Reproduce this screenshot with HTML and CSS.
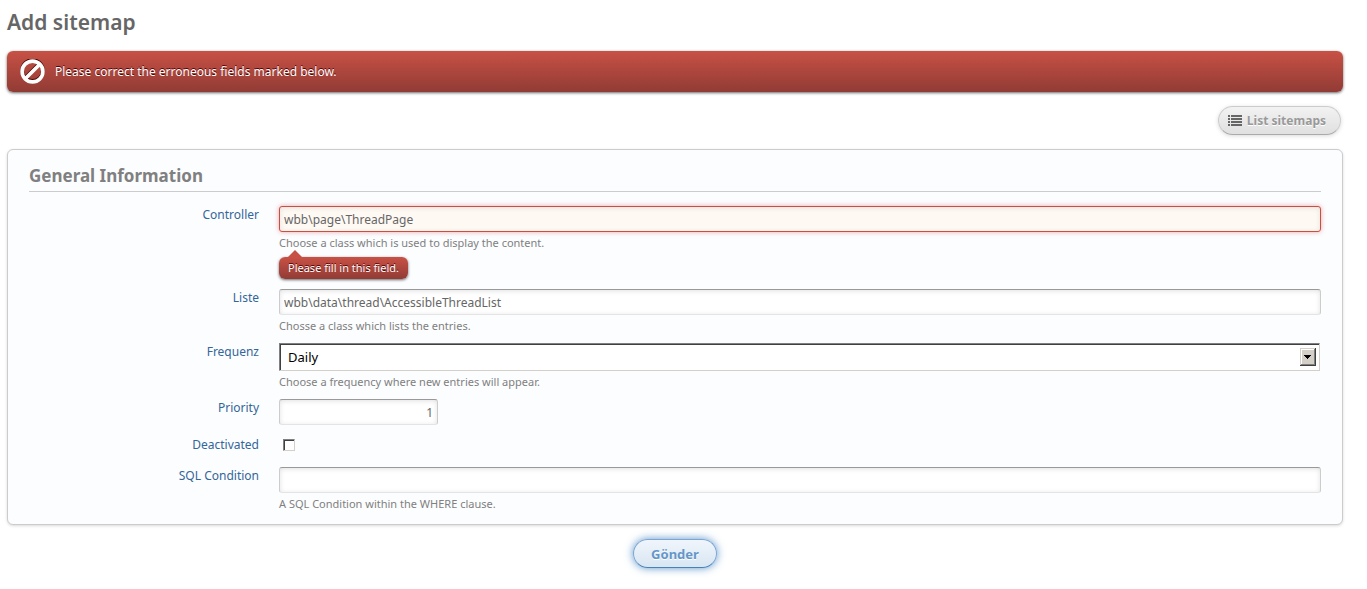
FILE: index.html
```
<!DOCTYPE html>
<html lang="en">
<head>
<meta charset="utf-8">
<title>Add sitemap</title>
<link rel="stylesheet" href="styles.css">
</head>
<body>
<main class="page">
  <h1 class="page-title">Add sitemap</h1>
  <p class="error-banner" role="alert">
    <svg class="error-icon" viewBox="0 0 24 24" aria-hidden="true">
      <g class="icon-shadow"><circle cx="12" cy="12" r="10"/><path d="M5.5 18.5 18.5 5.5"/></g>
      <g class="icon-ring"><circle cx="12" cy="12" r="10"/><path d="M5.5 18.5 18.5 5.5"/></g>
    </svg>
    <span>Please correct the erroneous fields marked below.</span>
  </p>
  <nav class="toolbar">
    <a class="button" href="#">
      <svg class="list-icon" viewBox="0 0 14 11" aria-hidden="true"><path d="M0 0h2v2H0zM3 0h11v2H3zM0 3h2v2H0zM3 3h11v2H3zM0 6h2v2H0zM3 6h11v2H3zM0 9h2v2H0zM3 9h11v2H3z"/></svg>
      <span>List sitemaps</span>
    </a>
  </nav>
  <form>
    <section class="panel">
      <h2 class="panel-title">General Information</h2>
      <div class="row">
        <label class="row-label" for="controller">Controller</label>
        <div class="field">
          <input class="text-input invalid" id="controller" type="text" value="wbb\page\ThreadPage">
          <small class="hint">Choose a class which is used to display the content.</small>
          <small class="field-error">Please fill in this field.</small>
        </div>
      </div>
      <div class="row">
        <label class="row-label" for="list">Liste</label>
        <div class="field">
          <input class="text-input" id="list" type="text" value="wbb\data\thread\AccessibleThreadList">
          <small class="hint">Chosse a class which lists the entries.</small>
        </div>
      </div>
      <div class="row">
        <label class="row-label" for="frequency">Frequenz</label>
        <div class="field">
          <div class="select-box">
            <select class="select" id="frequency"><option>Daily</option></select>
            <svg class="select-arrow" viewBox="0 0 16 18" aria-hidden="true"><path d="M4 7h7v1h-1v1H9v1H8v1H7v-1H6V9H5V8H4z"/></svg>
          </div>
          <small class="hint">Choose a frequency where new entries will appear.</small>
        </div>
      </div>
      <div class="row">
        <label class="row-label" for="priority">Priority</label>
        <div class="field">
          <input class="text-input short" id="priority" type="text" value="1">
        </div>
      </div>
      <div class="row compact">
        <label class="row-label" for="deactivated">Deactivated</label>
        <div class="field"><input class="checkbox" id="deactivated" type="checkbox"></div>
      </div>
      <div class="row">
        <label class="row-label" for="condition">SQL Condition</label>
        <div class="field">
          <input class="text-input" id="condition" type="text">
          <small class="hint">A SQL Condition within the WHERE clause.</small>
        </div>
      </div>
    </section>
    <div class="form-submit"><button class="button primary" type="submit">Gönder</button></div>
  </form>
</main>
</body>
</html>
```
FILE: styles.css
```
* { box-sizing: border-box; }
body {
  margin: 0;
  background: #fff;
  color: #666;
  font: 13px/18px "Trebuchet MS", "Noto Sans", sans-serif;
}
.page { padding: 6px 24px 0 7px; }
.page-title { margin: 0; font-size: 21px; line-height: 32px; font-weight: 600; }
.error-banner {
  display: flex;
  align-items: center;
  gap: 10px;
  height: 41px;
  margin: 13px 0 14px;
  padding: 0 13px;
  border-radius: 6px;
  background: linear-gradient(#c85145, #913b35);
  box-shadow: 0 1px 3px rgba(0, 0, 0, .6);
  color: #fff;
  font-size: 12px;
  text-shadow: 0 -1px 0 #500;
}
.error-icon { width: 25px; height: 25px; fill: none; stroke-width: 3.5; }
.icon-shadow { stroke: #400; transform: translateY(-1px); }
.icon-ring { stroke: #fff; }
.toolbar { display: flex; justify-content: flex-end; padding-right: 2px; }
.button {
  display: flex;
  align-items: center;
  gap: 5px;
  height: 29px;
  padding: 0 14px 0 9px;
  border: 1px solid #ccc;
  border-bottom-color: #aaa;
  border-radius: 15px;
  background: linear-gradient(#f2f2f2, #e0e0e0);
  box-shadow: 0 1px 4px rgba(0, 0, 0, .15);
  color: #999;
  font: bold 12px/18px "Trebuchet MS", "Noto Sans", sans-serif;
  text-decoration: none;
  text-shadow: 0 1px 0 #fff;
}
.list-icon { width: 14px; height: 11px; fill: #666; }
.panel {
  margin-top: 14px;
  padding: 13px 21px;
  border: 1px solid #ccc;
  border-radius: 6px;
  background: #fcfdff;
  box-shadow: 0 1px 3px rgba(0, 0, 0, .15);
}
.panel-title {
  margin: 0 0 14px;
  padding-bottom: 3px;
  border-bottom: 1px solid #ccc;
  color: #808080;
  font-size: 17px;
  line-height: 25px;
}
.row { display: grid; grid-template-columns: 230px 1fr; gap: 20px; margin-bottom: 10px; }
.row:last-child { margin-bottom: 0; }
.row-label { color: #369; font-size: 12px; text-align: right; }
.field { display: flex; flex-direction: column; align-items: flex-start; }
.text-input {
  width: 100%;
  height: 26px;
  padding: 0 4px;
  border: 1px solid #ccc;
  border-top-color: #999;
  border-bottom-color: #e4e4e4;
  border-radius: 3px;
  background: #fff;
  box-shadow: inset 0 1px 5px rgba(0, 0, 0, .12);
  color: #666;
  font: 12px/18px "Trebuchet MS", "Noto Sans", sans-serif;
}
.text-input.invalid { border-color: #c94f43; background: #fff9f4; box-shadow: 0 0 5px rgba(204, 0, 0, .35), inset 0 1px 5px rgba(0, 0, 0, .1); }
.text-input.short { width: 159px; text-align: right; }
.hint { padding-top: 3px; color: #808080; font-size: 11px; line-height: 15px; }
.field-error {
  position: relative;
  margin-top: 7px;
  padding: 0 9px;
  border-radius: 6px;
  background: linear-gradient(#c85145, #913b35);
  box-shadow: 0 1px 3px rgba(0, 0, 0, .6);
  color: #fff;
  font-size: 11px;
  line-height: 22px;
  text-shadow: 0 -1px 0 #500;
}
.field-error::before {
  content: "";
  position: absolute;
  left: 9px;
  top: -7px;
  border: 7px solid transparent;
  border-top: 0;
  border-bottom-color: #c85145;
}
.select-box { position: relative; width: 100%; padding-right: 1px; }
.select {
  appearance: none;
  display: block;
  width: 100%;
  height: 28px;
  padding: 0 8px;
  border: 1px solid #d4d0c8;
  border-top-color: #808080;
  border-left-color: #808080;
  border-radius: 0;
  background: #fff;
  box-shadow: inset 1px 1px 0 #404040;
  color: #000;
  font: 13px/18px "Noto Sans", sans-serif;
}
.select-arrow {
  position: absolute;
  right: 5px;
  top: 5px;
  width: 16px;
  height: 18px;
  background: #d4d0c8;
  box-shadow: inset -1px -1px 0 #404040, inset 1px 1px 0 #d4d0c8, inset -2px -2px 0 #808080, inset 2px 2px 0 #fff;
  pointer-events: none;
}
.row.compact { margin-bottom: 12px; }
.compact .row-label { line-height: 20px; }
.checkbox {
  appearance: none;
  width: 12px;
  height: 12px;
  margin: 4px;
  border: 1px solid #d4d0c8;
  border-top-color: #808080;
  border-left-color: #808080;
  background: #fff;
  box-shadow: inset 1px 1px 0 #404040;
}
.form-submit { display: flex; justify-content: center; padding: 14px 0 20px; }
.primary {
  padding: 0 17px;
  border-color: #7aa5d4;
  border-bottom-color: #4682b9;
  background: linear-gradient(#f0f5fb, #d8e6f3);
  box-shadow: 0 0 8px rgba(51, 122, 190, .8);
  color: #6496c8;
  font-size: 13px;
}
```
